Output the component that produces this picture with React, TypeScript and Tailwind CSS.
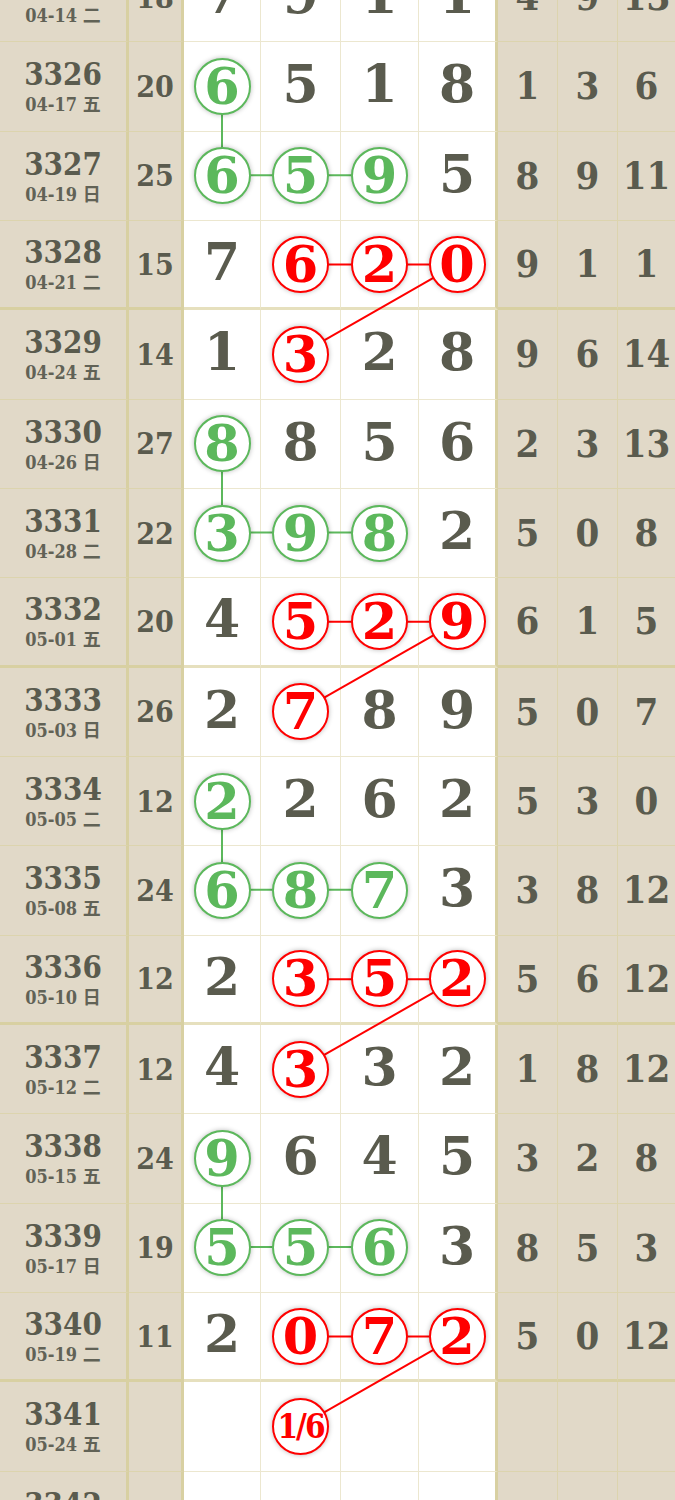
import React from 'react';

type Mark = 'g' | 'r' | '';

interface Row {
  id: string;
  date: string;
  sum: string;
  c: string[];
  m: Mark;
  hit: number[];
  d: string[];
}

const ROW = 89.33;
const SERIF = '"Liberation Serif", "Noto Sans CJK SC", serif';
const NARROW = '"DejaVu Serif Condensed", "Liberation Serif", "Noto Sans CJK SC", serif';
const WIDE = '"DejaVu Serif", "Liberation Serif", serif';

// centre x of the four white columns
const CX = [222, 300.5, 379.5, 457];

const rows: Row[] = [
  { id: '3325', date: '04-14 二', sum: '18', c: ['7', '9', '1', '1'], m: '', hit: [], d: ['4', '9', '13'] },
  { id: '3326', date: '04-17 五', sum: '20', c: ['6', '5', '1', '8'], m: 'g', hit: [0], d: ['1', '3', '6'] },
  { id: '3327', date: '04-19 日', sum: '25', c: ['6', '5', '9', '5'], m: 'g', hit: [0, 1, 2], d: ['8', '9', '11'] },
  { id: '3328', date: '04-21 二', sum: '15', c: ['7', '6', '2', '0'], m: 'r', hit: [1, 2, 3], d: ['9', '1', '1'] },
  { id: '3329', date: '04-24 五', sum: '14', c: ['1', '3', '2', '8'], m: 'r', hit: [1], d: ['9', '6', '14'] },
  { id: '3330', date: '04-26 日', sum: '27', c: ['8', '8', '5', '6'], m: 'g', hit: [0], d: ['2', '3', '13'] },
  { id: '3331', date: '04-28 二', sum: '22', c: ['3', '9', '8', '2'], m: 'g', hit: [0, 1, 2], d: ['5', '0', '8'] },
  { id: '3332', date: '05-01 五', sum: '20', c: ['4', '5', '2', '9'], m: 'r', hit: [1, 2, 3], d: ['6', '1', '5'] },
  { id: '3333', date: '05-03 日', sum: '26', c: ['2', '7', '8', '9'], m: 'r', hit: [1], d: ['5', '0', '7'] },
  { id: '3334', date: '05-05 二', sum: '12', c: ['2', '2', '6', '2'], m: 'g', hit: [0], d: ['5', '3', '0'] },
  { id: '3335', date: '05-08 五', sum: '24', c: ['6', '8', '7', '3'], m: 'g', hit: [0, 1, 2], d: ['3', '8', '12'] },
  { id: '3336', date: '05-10 日', sum: '12', c: ['2', '3', '5', '2'], m: 'r', hit: [1, 2, 3], d: ['5', '6', '12'] },
  { id: '3337', date: '05-12 二', sum: '12', c: ['4', '3', '3', '2'], m: 'r', hit: [1], d: ['1', '8', '12'] },
  { id: '3338', date: '05-15 五', sum: '24', c: ['9', '6', '4', '5'], m: 'g', hit: [0], d: ['3', '2', '8'] },
  { id: '3339', date: '05-17 日', sum: '19', c: ['5', '5', '6', '3'], m: 'g', hit: [0, 1, 2], d: ['8', '5', '3'] },
  { id: '3340', date: '05-19 二', sum: '11', c: ['2', '0', '7', '2'], m: 'r', hit: [1, 2, 3], d: ['5', '0', '12'] },
  { id: '3341', date: '05-24 五', sum: '', c: ['', '1/6', '', ''], m: 'r', hit: [1], d: ['', '', ''] },
  { id: '3342', date: '05-26 日', sum: '', c: ['', '', '', ''], m: '', hit: [], d: ['', '', ''] },
];

const cy = (i: number) => i * ROW + 43.5;

const Ball: React.FC<{ v: string; mark: Mark }> = ({ v, mark }) => (
  <div
    className={`relative z-10 flex h-[57px] w-[57px] items-center justify-center rounded-full border-2 bg-white shadow-[0_0_5px_rgba(0,0,0,0.28)] ${
      mark === 'g' ? 'border-[#5cb85c] text-[#5cb85c]' : 'border-[#ff0000] text-[#ff0000]'
    } ${v.length > 1 ? 'text-[33px] tracking-[-2px]' : 'text-[51px]'}`}
    style={{ fontFamily: v.length > 1 ? NARROW : WIDE }}
  >
    <span className="leading-none">{v}</span>
  </div>
);

const App: React.FC = () => {
  const lines: React.ReactNode[] = [];
  rows.forEach((r, i) => {
    if (r.m === 'g' && r.hit.length === 1 && rows[i + 1]) {
      lines.push(
        <g key={`g${i}`} stroke="#5cb85c" strokeWidth="2">
          <line x1={CX[0]} y1={cy(i)} x2={CX[0]} y2={cy(i + 1)} />
          <line x1={CX[0]} y1={cy(i + 1)} x2={CX[2]} y2={cy(i + 1)} />
        </g>
      );
    }
    if (r.m === 'r' && r.hit.length === 3 && rows[i + 1]) {
      lines.push(
        <g key={`r${i}`} stroke="#ff0000" strokeWidth="2">
          <line x1={CX[1]} y1={cy(i)} x2={CX[3]} y2={cy(i)} />
          <line x1={CX[3]} y1={cy(i)} x2={CX[1]} y2={cy(i + 1)} />
        </g>
      );
    }
  });

  return (
    <div className="h-[1500px] w-[675px] overflow-hidden bg-white text-[#5a5b4e]" style={{ fontFamily: SERIF }}>
      <div className="relative -mt-[47px] font-bold">
        {rows.map((r) => {
          const thick = Number(r.id) % 4 === 0;
          const bTan = thick ? 'border-b-[3px] border-b-[#d8d0a2]' : 'border-b border-b-[#dcd4ae]';
          const bWhite = thick ? 'border-b-[3px] border-b-[#e6e0be]' : 'border-b border-b-[#ece7cf]';
          return (
            <div
              key={r.id}
              className="grid h-[89.33px] grid-cols-[129px_55px_77px_80px_78px_79px_60px_60px_57px]"
            >
              <div
                className={`flex flex-col items-center justify-center border-r-[3px] border-r-[#d8d0a2] bg-[#e1d9c8] ${bTan}`}
                style={{ fontFamily: NARROW }}
              >
                <span className="text-[31px] leading-[36px]">{r.id}</span>
                <span className="mt-[2px] text-[18px] leading-[22px] text-[#616256]">{r.date}</span>
              </div>
              <div
                className={`flex items-center justify-center border-r-[3px] border-r-[#d8d0a2] bg-[#e1d9c8] text-[30px] ${bTan}`}
                style={{ fontFamily: NARROW }}
              >
                {r.sum}
              </div>
              {r.c.map((v, k) => (
                <div
                  key={k}
                  className={`flex items-center justify-center bg-white ${
                    k === 3 ? 'border-r-[3px] border-r-[#d8d0a2]' : 'border-r border-r-[#ece7cf]'
                  } ${bWhite}`}
                >
                  {r.hit.includes(k) ? (
                    <Ball v={v} mark={r.m} />
                  ) : (
                    <span className="pb-[4px] text-[52px] leading-none" style={{ fontFamily: WIDE }}>
                      {v}
                    </span>
                  )}
                </div>
              ))}
              {r.d.map((v, k) => (
                <div
                  key={k}
                  className={`flex items-center justify-center bg-[#e1d9c8] text-[38px] leading-none ${
                    k < 2 ? 'border-r border-r-[#dcd4ae]' : ''
                  } ${bTan}`}
                  style={{ fontFamily: NARROW }}
                >
                  {v}
                </div>
              ))}
            </div>
          );
        })}
        <svg className="pointer-events-none absolute left-0 top-0" width="675" height={rows.length * ROW}>
          {lines}
        </svg>
      </div>
    </div>
  );
};

export default App;
